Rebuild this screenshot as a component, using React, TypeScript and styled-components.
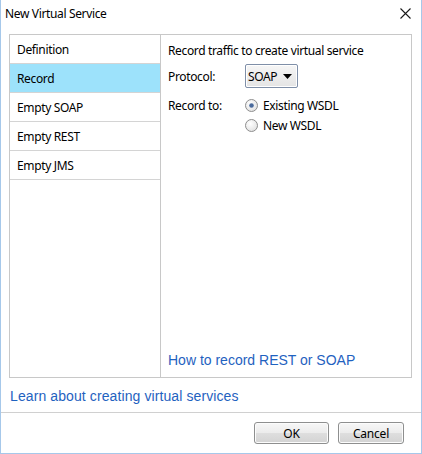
import styled, { createGlobalStyle } from "styled-components";

const GlobalStyle = createGlobalStyle`
  html, body {
    margin: 0;
    padding: 0;
    background: #ffffff;
  }
  * {
    box-sizing: border-box;
  }
`;

const menuItems = ["Definition", "Record", "Empty SOAP", "Empty REST", "Empty JMS"];

export default function App() {
  return (
    <>
      <GlobalStyle />
      <Window>
        <TitleBar>
          <Title>New Virtual Service</Title>
          <CloseButton aria-label="Close">
            <svg width="11" height="11" viewBox="0 0 11 11">
              <path d="M0.5 0.5 L10.5 10.5 M10.5 0.5 L0.5 10.5" stroke="#1a1a1a" strokeWidth="1.1" />
            </svg>
          </CloseButton>
        </TitleBar>
        <Body>
          <Panel>
            <Menu>
              {menuItems.map((item) => (
                <MenuItem key={item} $active={item === "Record"}>
                  {item}
                </MenuItem>
              ))}
            </Menu>
            <Content>
              <Heading>Record traffic to create virtual service</Heading>
              <FieldRow>
                <FieldLabel>Protocol:</FieldLabel>
                <Select>
                  <span>SOAP</span>
                  <svg width="9" height="5" viewBox="0 0 9 5">
                    <path d="M0 0 L9 0 L4.5 5 Z" fill="#000" />
                  </svg>
                </Select>
              </FieldRow>
              <FieldRow $top>
                <FieldLabel>Record to:</FieldLabel>
                <RadioGroup>
                  <Radio id="existing" label="Existing WSDL" checked />
                  <Radio id="new" label="New WSDL" />
                </RadioGroup>
              </FieldRow>
              <Spacer />
              <Link>How to record REST or SOAP</Link>
            </Content>
          </Panel>
          <FooterLink>Learn about creating virtual services</FooterLink>
        </Body>
        <ButtonBar>
          <DialogButton $width={75}>OK</DialogButton>
          <DialogButton $width={66}>Cancel</DialogButton>
        </ButtonBar>
      </Window>
    </>
  );
}

function Radio({ id, label, checked }: { id: string; label: string; checked?: boolean }) {
  return (
    <RadioRow>
      <svg width="13" height="13" viewBox="0 0 13 13">
        <defs>
          <radialGradient id={`rg-${id}`} cx="0.4" cy="0.35" r="0.7">
            <stop offset="0" stopColor="#ffffff" />
            <stop offset="1" stopColor="#e0e0e0" />
          </radialGradient>
        </defs>
        <circle cx="6.5" cy="6.5" r="6" fill={`url(#rg-${id})`} stroke="#8e8e8e" />
        {checked && <circle cx="6.5" cy="6.5" r="2.3" fill="#4a6a9c" />}
      </svg>
      <span>{label}</span>
    </RadioRow>
  );
}

const Window = styled.div`
  width: 422px;
  height: 454px;
  display: flex;
  flex-direction: column;
  background: #ffffff;
  border: 1px solid #a6c8ea;
  border-top: none;
  font-family: "Noto Sans", "Open Sans", sans-serif;
  font-size: 12px;
  letter-spacing: -0.35px;
  color: #000000;
`;

const TitleBar = styled.div`
  height: 29px;
  display: flex;
  align-items: center;
  justify-content: space-between;
  padding: 0 10px 3px 4px;
`;

const Title = styled.span`
  font-size: 12px;
`;

const CloseButton = styled.span`
  display: flex;
  align-items: center;
`;

const Body = styled.div`
  flex: 1;
  display: flex;
  flex-direction: column;
  padding: 5px 9px 0 8px;
  border-bottom: 1px solid #d0d0d0;
`;

const Panel = styled.div`
  height: 344px;
  display: flex;
  border: 1px solid #c8c8c8;
`;

const Menu = styled.div`
  width: 151px;
  border-right: 1px solid #c8c8c8;
`;

const MenuItem = styled.div<{ $active?: boolean }>`
  height: 29px;
  display: flex;
  align-items: center;
  padding-left: 7px;
  border-bottom: 1px solid #d4d4d4;
  background: ${(p) => (p.$active ? "#9de2fb" : "transparent")};
`;

const Content = styled.div`
  flex: 1;
  display: flex;
  flex-direction: column;
  padding: 7px 7px 7px 7px;
`;

const Heading = styled.div`
  height: 17px;
  line-height: 17px;
`;

const FieldRow = styled.div<{ $top?: boolean }>`
  display: flex;
  align-items: ${(p) => (p.$top ? "flex-start" : "center")};
  margin-top: ${(p) => (p.$top ? "9px" : "5px")};
`;

const FieldLabel = styled.span`
  width: 77px;
  line-height: 17px;
`;

const Select = styled.div`
  width: 53px;
  height: 24px;
  display: flex;
  align-items: center;
  justify-content: space-between;
  padding: 0 5px 0 2px;
  border: 1px solid #7f8fa8;
  border-radius: 2px;
  background: linear-gradient(#f6f6f6, #e4e4e4);
  box-shadow: inset 0 0 0 1px #ffffff;
`;

const RadioGroup = styled.div`
  display: flex;
  flex-direction: column;
  gap: 3px;
`;

const RadioRow = styled.div`
  display: flex;
  align-items: center;
  gap: 5px;
  height: 17px;
`;

const Spacer = styled.div`
  flex: 1;
`;

const Link = styled.a`
  font-family: "Liberation Sans", Arial, sans-serif;
  font-size: 14px;
  letter-spacing: 0;
  color: #1f62c0;
  line-height: 17px;
  margin-bottom: 1px;
`;

const FooterLink = styled.a`
  font-family: "Liberation Sans", Arial, sans-serif;
  font-size: 14px;
  letter-spacing: 0.1px;
  color: #1f62c0;
  line-height: 17px;
  margin-top: 10px;
  padding-left: 1px;
`;

const ButtonBar = styled.div`
  height: 40px;
  display: flex;
  justify-content: flex-end;
  align-items: flex-start;
  gap: 9px;
  padding: 9px 17px 0 0;
`;

const DialogButton = styled.button<{ $width: number }>`
  width: ${(p) => p.$width}px;
  height: 22px;
  font-family: "Noto Sans", "Open Sans", sans-serif;
  font-size: 12px;
  letter-spacing: -0.2px;
  color: #000000;
  border: 1px solid #8e8f8f;
  border-radius: 3px;
  background: linear-gradient(#f7f7f7, #ececec 48%, #dedede 52%, #d3d3d3);
  box-shadow: inset 0 0 0 1px #fcfcfc;
  padding: 0;
`;
